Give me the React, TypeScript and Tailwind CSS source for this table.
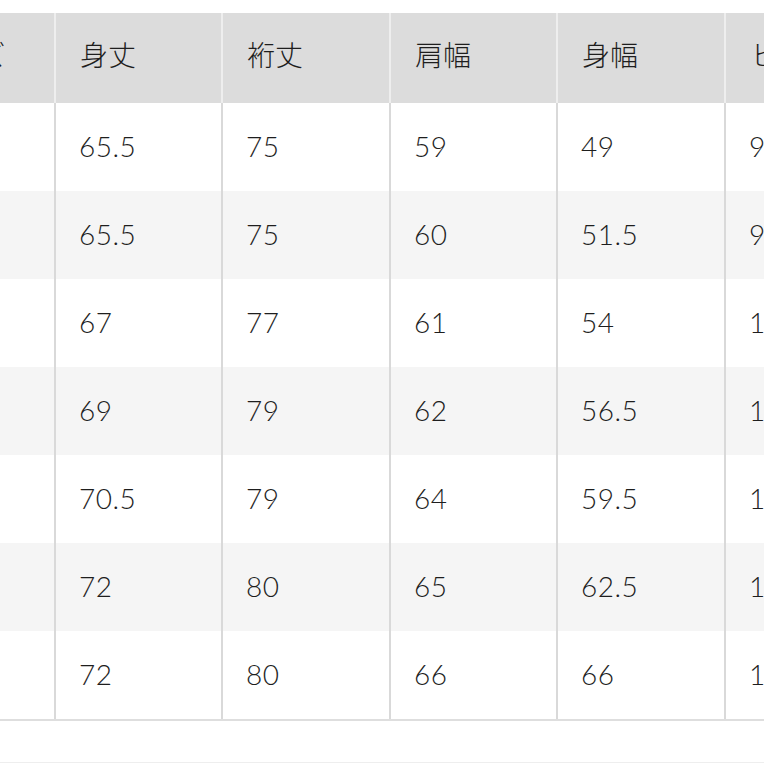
const headers = ['サイズ', '身丈', '裄丈', '肩幅', '身幅', 'ヒップ']

const rows: string[][] = [
  ['', '65.5', '75', '59', '49', '96'],
  ['', '65.5', '75', '60', '51.5', '99'],
  ['', '67', '77', '61', '54', '102'],
  ['', '69', '79', '62', '56.5', '105'],
  ['', '70.5', '79', '64', '59.5', '108'],
  ['', '72', '80', '65', '62.5', '111'],
  ['', '72', '80', '66', '66', '114'],
]

const font = { fontFamily: '"Lato", "Noto Sans CJK JP", sans-serif' }

export default function App() {
  return (
    <div className="w-[764px] h-[764px] overflow-hidden bg-white text-[#1e1e1e]" style={font}>
      <div className="h-[13px]" />
      <div className="w-[900px]">
        <div className="grid grid-cols-[56px_167px_168px_167px_168px_168px] h-[90px] bg-[#dcdcdc]">
          {headers.map((h, i) => (
            <div
              key={h}
              className={
                'flex items-center overflow-hidden pb-[6px] text-[28px] font-light border-r-2 border-[#eeeeee] ' +
                (i === 0 ? '' : 'pl-[24px]')
              }
            >
              {i === 0 ? <span className="ml-[-78px] whitespace-nowrap">{h}</span> : <span className="whitespace-nowrap">{h}</span>}
            </div>
          ))}
        </div>
        {rows.map((r, ri) => (
          <div
            key={ri}
            className={
              'grid grid-cols-[56px_167px_168px_167px_168px_168px] h-[88px] ' +
              (ri % 2 === 1 ? 'bg-[#f5f5f5]' : 'bg-white')
            }
          >
            {r.map((c, ci) => (
              <div
                key={ci}
                className="flex items-center pl-[23px] pb-[2px] border-r-2 border-[#d9d9d9] text-[28px] font-light tracking-[0.5px]"
              >
                {c}
              </div>
            ))}
          </div>
        ))}
        <div className="h-[2px] bg-[#dedede]" />
      </div>
      <div className="h-[41px]" />
      <div className="h-[1px] bg-[#eeeeee]" />
    </div>
  )
}
